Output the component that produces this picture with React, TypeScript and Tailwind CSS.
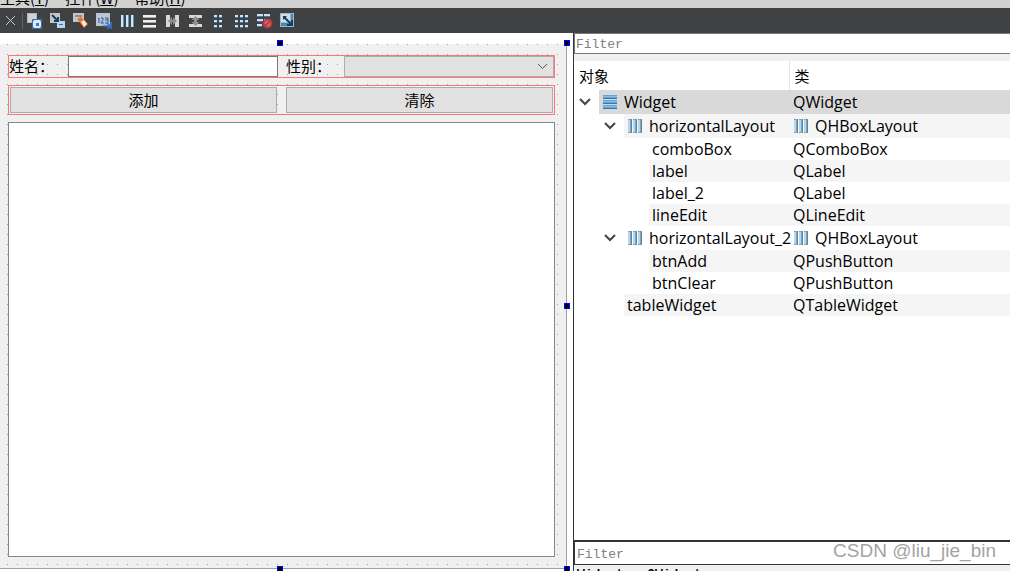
import type { ReactNode } from "react";

const menus = [
  { label: "工具", key: "T" },
  { label: "控件", key: "W" },
  { label: "帮助", key: "H" },
];

const tools: { name: string; art: ReactNode }[] = [
  {
    name: "Edit Widgets",
    art: (
      <>
        <path d="M0 0h10v10H0z" fill="#b4b6b8" />
        <path d="M1 1h8v8H1z" fill="#cfd1d3" />
        <path d="M5 6h10v10H5z" fill="#3d6cae" />
        <path d="M6 7h8v8H6z" fill="#dce8f8" />
        <path d="M5 6h2v2H5zM13 6h2v2h-2zM5 14h2v2H5zM13 14h2v2h-2zM9 10h3v3H9z" fill="#3d78c8" />
      </>
    ),
  },
  {
    name: "Edit Signals/Slots",
    art: (
      <>
        <path d="M0 0h10v10H0z" fill="#c3c6c8" />
        <path d="M7 8h8v7H7z" fill="#b9d5f4" />
        <path d="M9 11h4v1H9z" fill="#3d6cae" />
        <path d="M2 2l6 6M8 4v4H4" stroke="#1d3f5c" strokeWidth="2" fill="none" />
      </>
    ),
  },
  {
    name: "Edit Buddies",
    art: (
      <>
        <path d="M0 0h11v9H0z" fill="#c3c6c8" />
        <path d="M2 3h7" stroke="#55585b" />
        <path d="M4 6l4-2 7 7-4 4z" fill="#ec7426" />
        <path d="M8 9l3-2 3 4-3 3z" fill="#fbe9dc" />
      </>
    ),
  },
  {
    name: "Edit Tab Order",
    art: (
      <>
        <path d="M0 0h14v13H0z" fill="#b9c5d5" />
        <path d="M3 5v5M2 6l1-1M5 5h2v2l-2 3h3M9 5h3v5H9M9 7h3" stroke="#2f6199" fill="none" />
        <path d="M7 13h7M11 10l3 3-3 3M15 9v7" stroke="#3977c6" strokeWidth="1.5" fill="none" />
      </>
    ),
  },
  {
    name: "Lay Out Horizontally",
    art: (
      <>
        <path d="M2 2h2v12H2zM7 2h2v12H7zM12 2h2v12h-2z" fill="#c6e9fb" />
        <path d="M4 2h1v12H4zM9 2h1v12H9zM14 2h1v12h-1z" fill="#6392b7" />
      </>
    ),
  },
  {
    name: "Lay Out Vertically",
    art: (
      <>
        <path d="M1 2h13v2H1zM1 7h13v2H1zM1 12h13v2H1z" fill="#efefef" />
        <path d="M1 4h13v1H1zM1 9h13v1H1zM1 14h13v1H1z" fill="#aaa" />
      </>
    ),
  },
  {
    name: "Horizontal Splitter",
    art: (
      <>
        <path d="M1 2h4v12H1zM10 2h4v12h-4z" fill="#d8d8d8" />
        <path d="M3 8l4-4v8zM12 8L8 4v8z" fill="#8f8f8f" />
        <path d="M5 7h6v2H5z" fill="#8f8f8f" />
      </>
    ),
  },
  {
    name: "Vertical Splitter",
    art: (
      <>
        <path d="M1 2h13v3H1zM1 11h13v3H1z" fill="#d8d8d8" />
        <path d="M7.5 3l4 4h-8zM7.5 13l4-4h-8z" fill="#8f8f8f" />
        <path d="M6 5h3v6H6z" fill="#8f8f8f" />
      </>
    ),
  },
  {
    name: "Form Layout",
    art: (
      <>
        <path d="M3 2h3v2H3zM8 2h3v2H8zM3 7h3v2H3zM8 7h3v2H8zM3 12h3v2H3zM8 12h3v2H8z" fill="#c6e3f7" />
        <path d="M3 4h3v1H3zM8 4h3v1H8zM3 9h3v1H3zM8 9h3v1H8zM3 14h3v1H3zM8 14h3v1H8z" fill="#477aa7" />
      </>
    ),
  },
  {
    name: "Grid Layout",
    art: (
      <>
        <path
          d="M1 2h3v2H1zM6 2h3v2H6zM11 2h3v2h-3zM1 7h3v2H1zM6 7h3v2H6zM11 7h3v2h-3zM1 12h3v2H1zM6 12h3v2H6zM11 12h3v2h-3z"
          fill="#c6e3f7"
        />
        <path
          d="M1 4h3v1H1zM6 4h3v1H6zM11 4h3v1h-3zM1 9h3v1H1zM6 9h3v1H6zM11 9h3v1h-3zM1 14h3v1H1zM6 14h3v1H6zM11 14h3v1h-3z"
          fill="#477aa7"
        />
      </>
    ),
  },
  {
    name: "Break Layout",
    art: (
      <>
        <path d="M0 1h6v2H0zM7 1h6v2H7zM0 6h6v2H0zM7 6h4v2H7zM0 11h5v2H0z" fill="#c6e3f7" />
        <path d="M0 3h6v1H0zM7 3h6v1H7zM0 8h5v1H0zM0 13h5v1H0z" fill="#477aa7" />
        <circle cx="10.5" cy="10.5" r="4" fill="#9a8888" stroke="#c8343a" strokeWidth="2" />
        <path d="M8 13l5-5" stroke="#c8343a" strokeWidth="2" />
      </>
    ),
  },
  {
    name: "Adjust Size",
    art: (
      <>
        <path d="M0 0h14v14H0z" fill="#8fb9d6" />
        <path d="M1 1h9v8H1z" fill="#d6dce0" />
        <path d="M11 1h2v8h-2zM1 10h8v3H1z" fill="#4c88b3" />
        <path d="M4 4l7 7M12 7v5H7" stroke="#163c5d" strokeWidth="2" fill="none" />
        <path d="M3 3h4L3 7z" fill="#163c5d" />
      </>
    ),
  },
];

type Kind = "widget" | "hbox";

type TreeRow = {
  name: string;
  type: string;
  kind?: Kind;
  indent: string;
  row: string;
};

const rows: TreeRow[] = [
  { name: "Widget", type: "QWidget", kind: "widget", indent: "w-[25px]", row: "h-6 bg-[#d9d9d9]" },
  { name: "horizontalLayout", type: "QHBoxLayout", kind: "hbox", indent: "w-[50px]", row: "h-6 bg-[#f5f5f5]" },
  { name: "comboBox", type: "QComboBox", indent: "w-[75px]", row: "h-[22px]" },
  { name: "label", type: "QLabel", indent: "w-[75px]", row: "h-[22px] bg-[#f5f5f5]" },
  { name: "label_2", type: "QLabel", indent: "w-[75px]", row: "h-[22px]" },
  { name: "lineEdit", type: "QLineEdit", indent: "w-[75px]", row: "h-[22px] bg-[#f5f5f5]" },
  { name: "horizontalLayout_2", type: "QHBoxLayout", kind: "hbox", indent: "w-[50px]", row: "h-6" },
  { name: "btnAdd", type: "QPushButton", indent: "w-[75px]", row: "h-[22px] bg-[#f5f5f5]" },
  { name: "btnClear", type: "QPushButton", indent: "w-[75px]", row: "h-[22px]" },
  { name: "tableWidget", type: "QTableWidget", indent: "w-[50px]", row: "h-[22px] bg-[#f5f5f5]" },
];

// selection handles around the form
const handles = [
  "left-[49%] -top-1",
  "-right-[4px] -top-1",
  "-right-[4px] top-1/2 -translate-y-1/2",
  "left-[49%] -bottom-[4px]",
  "-right-[4px] -bottom-[4px]",
];

function Chevron() {
  return (
    <svg width="12" height="8" viewBox="0 0 12 8" fill="none">
      <path d="M1 1l5 5 5-5" stroke="#444" strokeWidth="2" />
    </svg>
  );
}

function NodeIcon({ kind }: { kind: Kind }) {
  if (kind === "widget") {
    return (
      <svg width="16" height="16" viewBox="0 0 16 16" className="shrink-0">
        <path d="M1 1h14v4H1zM1 6h14v4H1zM1 11h14v4H1z" fill="#5fa6dc" />
        <path d="M1 2h14v1H1zM1 7h14v1H1zM1 12h14v1H1z" fill="#83c0ec" />
        <path d="M1 4h14v1H1zM1 9h14v1H1zM1 14h14v1H1z" fill="#45779f" />
      </svg>
    );
  }
  return (
    <svg width="16" height="16" viewBox="0 0 16 16" className="shrink-0">
      <path d="M1 1h4v14H1zM6 1h4v14H6zM11 1h4v14h-4z" fill="#84a3b9" />
      <path d="M1 2h2v12H1zM6 2h2v12H6zM11 2h2v12h-2z" fill="#b0d9f2" />
      <path d="M4 1h1v14H4zM9 1h1v14H9zM14 1h1v14h-1z" fill="#64839b" />
    </svg>
  );
}

function FormEditor() {
  return (
    <div className="flex min-w-0 flex-col bg-white pt-[11px] pr-1.5 pb-0.5">
      <div className="relative flex flex-1 flex-col border-r border-b border-[#a0a0a0] bg-[#f0f0f0] bg-[conic-gradient(at_1px_1px,transparent_75%,#a0a0a0_0)] bg-[length:10px_10px] bg-[position:7px_0px] pt-[11px] pr-[11px] pb-[11px] pl-2">
        <div className="flex h-[23px] border border-[#ff7474]">
          <label htmlFor="name" className="w-[59px] text-[15px] leading-5 whitespace-nowrap">
            姓名：
          </label>
          <div className="flex min-w-0 flex-1">
            <input id="name" className="w-full border border-[#7a7a7a] bg-white px-1 text-[15px] outline-none" />
          </div>
          <label htmlFor="gender" className="ml-2 w-[58px] text-[15px] leading-5 whitespace-nowrap">
            性别：
          </label>
          <div className="relative flex min-w-0 flex-1">
            <select id="gender" className="w-full appearance-none border border-[#adadad] bg-[#e1e1e1]" />
            <svg width="11" height="7" viewBox="0 0 11 7" fill="none" className="pointer-events-none absolute top-[7px] right-1.5">
              <path d="M1 1l4.5 4.5L10 1" stroke="#555" />
            </svg>
          </div>
        </div>

        <div className="mt-[7px] flex h-[30px] gap-[9px] border border-[#ff7474] p-px">
          <button className="flex-1 border border-[#adadad] bg-[#e1e1e1] text-[15px] leading-6">添加</button>
          <button className="flex-1 border border-[#adadad] bg-[#e1e1e1] text-[15px] leading-6">清除</button>
        </div>

        <div className="mt-[7px] flex-1 border border-[#828790] bg-white" />

        {handles.map((pos) => (
          <span key={pos} className={`absolute size-1.5 border border-[#0000ff] bg-black ${pos}`} />
        ))}
      </div>
    </div>
  );
}

function ObjectTree() {
  return (
    <table className="w-full table-fixed border-collapse bg-white font-['Open_Sans','Noto_Sans_CJK_SC',sans-serif] text-[16px] leading-5">
      <thead>
        <tr className="h-[29px] text-left text-[15px]">
          <th className="w-[215px] border-r border-[#e5e5e5] p-0 pl-[5px] font-normal">对象</th>
          <th className="p-0 pl-[5px] font-normal">类</th>
        </tr>
      </thead>
      <tbody>
        {rows.map((item) => (
          <tr key={item.name}>
            <td className="p-0">
              <div className="flex">
                <div className={`flex shrink-0 items-center justify-end pr-2 ${item.indent}`}>
                  {item.kind && <Chevron />}
                </div>
                <div className={`flex min-w-0 flex-1 items-center gap-1.5 pl-[3px] whitespace-nowrap ${item.row}`}>
                  {item.kind && <NodeIcon kind={item.kind} />}
                  {item.name}
                </div>
              </div>
            </td>
            <td className="p-0">
              <div className={`flex items-center gap-1.5 pl-1 whitespace-nowrap ${item.row}`}>
                {item.kind === "hbox" && <NodeIcon kind="hbox" />}
                {item.type}
              </div>
            </td>
          </tr>
        ))}
      </tbody>
    </table>
  );
}

function Inspector() {
  return (
    <div className="relative flex min-w-0 flex-col border-l border-[#333] bg-white">
      <input
        aria-label="Filter objects"
        placeholder="Filter"
        className="h-[21px] border border-r-0 border-[#7a7a7a] px-px pt-0.5 font-['Liberation_Mono',monospace] text-[13px] outline-none placeholder:text-[#808080]"
      />
      <div className="h-[7px] bg-[#f0f0f0]" />
      <div className="min-h-0 flex-1">
        <ObjectTree />
      </div>
      <input
        aria-label="Filter properties"
        placeholder="Filter"
        className="h-[25px] border border-t-2 border-r-0 border-[#333] px-0.5 pt-0.5 font-['Liberation_Mono',monospace] text-[13px] outline-none placeholder:text-[#808080]"
      />
      <div className="h-1.5 overflow-hidden bg-[#f0f0f0] pl-[3px] font-['Liberation_Mono',monospace] text-[13px] leading-[15px] font-bold">
        <p className="pt-0.5">Widget : QWidget</p>
      </div>
      <p className="absolute right-3.5 bottom-2 font-['Liberation_Sans',sans-serif] text-[19px] leading-6 text-[#a3a3a3]">
        CSDN @liu_jie_bin
      </p>
    </div>
  );
}

export default function App() {
  return (
    <div className="flex h-screen flex-col overflow-hidden bg-white font-['Noto_Sans_CJK_SC',sans-serif] text-black">
      {/* Menu bar */}
      <nav className="flex h-2 shrink-0 items-end gap-4 overflow-hidden bg-[#d2d2d2] text-[15px] leading-5">
        {menus.map((menu) => (
          <button key={menu.key} className="whitespace-nowrap">
            {menu.label}(<u>{menu.key}</u>)
          </button>
        ))}
      </nav>

      {/* Toolbar */}
      <div className="flex h-[25px] shrink-0 items-center bg-[#404142] pl-[5px]">
        <button aria-label="Close">
          <svg width="11" height="11" viewBox="0 0 11 11">
            <path d="M1 1l9 9M10 1l-9 9" stroke="#c8c8c8" />
          </svg>
        </button>
        <div className="mr-1 ml-1.5 h-4 w-px bg-[#606162]" />
        <div className="flex gap-[7px]">
          {tools.map((tool) => (
            <button key={tool.name} aria-label={tool.name}>
              <svg width="16" height="16" viewBox="0 0 16 16">
                {tool.art}
              </svg>
            </button>
          ))}
        </div>
      </div>

      <main className="grid min-h-0 flex-1 grid-cols-[573fr_437fr]">
        <FormEditor />
        <Inspector />
      </main>
    </div>
  );
}
